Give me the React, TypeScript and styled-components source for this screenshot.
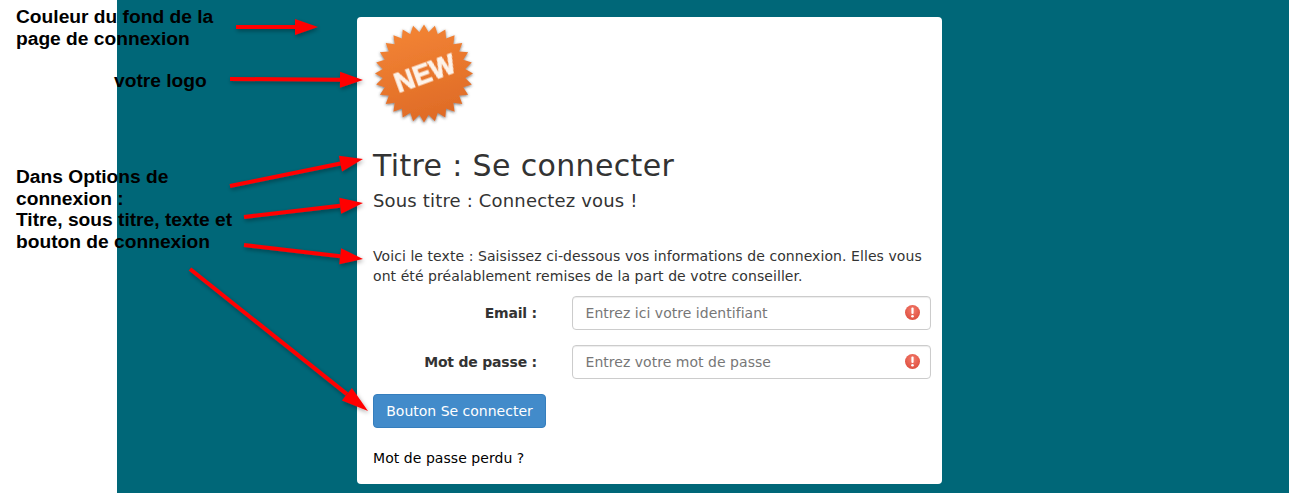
import styled, { createGlobalStyle } from "styled-components";

const GlobalStyle = createGlobalStyle`
  html, body {
    margin: 0;
    padding: 0;
    background: #fff;
  }
`;

const Page = styled.div`
  position: relative;
  display: flex;
  width: 1289px;
  height: 493px;
  overflow: hidden;
  font-family: "DejaVu Sans", Verdana, sans-serif;
  color: #333;
`;

const Margin = styled.div`
  flex: 0 0 117px;
  background: #fff;
`;

const Backdrop = styled.main`
  flex: 1;
  background: #006778;
  padding: 17px 0 0 240px;
`;

const Card = styled.section`
  box-sizing: border-box;
  width: 585px;
  height: 467px;
  background: #fff;
  border-radius: 4px;
  padding: 0 11px 0 16px;
`;

const LogoBox = styled.div`
  height: 118px;
`;

const Title = styled.h1`
  margin: 14px 0 0;
  font-size: 30px;
  font-weight: 400;
  line-height: 33px;
  letter-spacing: 0.35px;
`;

const Subtitle = styled.h2`
  margin: 9px 0 0;
  font-size: 18px;
  font-weight: 400;
  line-height: 19px;
  letter-spacing: 0.17px;
`;

const Intro = styled.p`
  margin: 36px 0 0;
  font-size: 14px;
  line-height: 20px;
  letter-spacing: 0.07px;
`;

const FormGrid = styled.form`
  display: grid;
  grid-template-columns: 164px 359px;
  column-gap: 35px;
  row-gap: 15px;
  margin-top: 10px;
`;

const Label = styled.label`
  font-size: 14px;
  font-weight: 700;
  line-height: 20px;
  letter-spacing: -0.2px;
  padding-top: 7px;
  text-align: right;
  height: 27px;
`;

const InputWrap = styled.div`
  position: relative;
  height: 34px;
`;

const Input = styled.input`
  box-sizing: border-box;
  width: 100%;
  height: 34px;
  padding: 6px 12px 6px 12.5px;
  border: 1px solid #ccc;
  border-radius: 4px;
  background: #fff;
  box-shadow: inset 0 1px 1px rgba(0, 0, 0, 0.075);
  font-family: inherit;
  font-size: 14px;
  letter-spacing: 0.03px;
  color: #555;

  &::placeholder {
    color: #777;
    opacity: 1;
  }
`;

const AlertMark = styled.svg`
  position: absolute;
  top: 8px;
  right: 10px;
  width: 17px;
  height: 17px;
`;

const SubmitButton = styled.button`
  display: block;
  box-sizing: border-box;
  width: 173px;
  height: 34px;
  margin-top: 15px;
  padding: 0;
  border: 1px solid #357ebd;
  border-radius: 4px;
  background: #428bca;
  color: #fff;
  font-family: inherit;
  font-size: 14px;
`;

const LostLink = styled.a`
  display: block;
  margin-top: 20px;
  font-size: 14px;
  line-height: 20px;
  letter-spacing: 0.05px;
  color: #000;
  text-decoration: none;
`;

const Note = styled.div<{ $left: number; $top: number }>`
  position: absolute;
  left: ${({ $left }) => $left}px;
  top: ${({ $top }) => $top}px;
  font-family: "Liberation Sans", Arial, sans-serif;
  font-size: 19.2px;
  font-weight: 700;
  line-height: 21.5px;
  color: #000;
`;

const ArrowLayer = styled.svg`
  position: absolute;
  inset: 0;
  width: 1289px;
  height: 493px;
  pointer-events: none;
`;

const arrows = [
  { x1: 236, y1: 27, x2: 318, y2: 27, head: 23 },
  { x1: 230, y1: 79, x2: 363, y2: 80, head: 23 },
  { x1: 230, y1: 186, x2: 363, y2: 159, head: 23 },
  { x1: 244, y1: 217, x2: 363, y2: 203, head: 23 },
  { x1: 244, y1: 245, x2: 363, y2: 259, head: 23 },
  { x1: 190, y1: 269, x2: 368, y2: 411, head: 27 }
];

const Arrow = ({ x1, y1, x2, y2, head }: (typeof arrows)[number]) => {
  const len = Math.hypot(x2 - x1, y2 - y1);
  const ux = (x2 - x1) / len;
  const uy = (y2 - y1) / len;
  const bx = x2 - ux * head;
  const by = y2 - uy * head;
  const half = 8;
  const pts = [
    `${x2},${y2}`,
    `${bx - uy * half},${by + ux * half}`,
    `${bx + uy * half},${by - ux * half}`
  ].join(" ");
  return (
    <g>
      <line x1={x1} y1={y1} x2={bx} y2={by} stroke="#f00" strokeWidth={4} />
      <polygon points={pts} fill="#f00" />
    </g>
  );
};

// seal outline, points alternate between the tips and the notches
const sealPoints = (cx: number, cy: number, outer: number, inner: number, teeth: number) => {
  const pts: string[] = [];
  for (let i = 0; i < teeth * 2; i++) {
    const r = i % 2 === 0 ? outer : inner;
    const a = (Math.PI * i) / teeth - Math.PI / 2;
    pts.push(`${(cx + r * Math.cos(a)).toFixed(1)},${(cy + r * Math.sin(a)).toFixed(1)}`);
  }
  return pts.join(" ");
};

const Seal = () => (
  <svg width="118" height="118" viewBox="0 0 118 118" style={{ display: "block" }}>
    <defs>
      <linearGradient id="sealFill" x1="0.35" y1="0" x2="0.65" y2="1">
        <stop offset="0" stopColor="#f38434" />
        <stop offset="1" stopColor="#de6a26" />
      </linearGradient>
      <filter id="sealShadow" x="-20%" y="-20%" width="140%" height="140%">
        <feDropShadow dx="0" dy="1" stdDeviation="1.6" floodColor="#333" floodOpacity="0.7" />
      </filter>
      <filter id="sealSoft">
        <feGaussianBlur stdDeviation="0.7" />
      </filter>
    </defs>
    <polygon
      points={sealPoints(51, 56.5, 49, 41.5, 28)}
      fill="url(#sealFill)"
      filter="url(#sealShadow)"
    />
    <text
      x="52.5"
      y="65.5"
      textAnchor="middle"
      transform="rotate(-20 51 58)"
      fontFamily="Liberation Sans, Arial, sans-serif"
      fontWeight="700"
      fontSize="27"
      fill="#fdf3ea"
      stroke="#fdf3ea"
      strokeWidth="0.8"
      filter="url(#sealSoft)"
    >
      NEW
    </text>
  </svg>
);

const Alert = () => (
  <AlertMark viewBox="0 0 17 17">
    <defs>
      <radialGradient id="alertFill" cx="0.5" cy="0.35" r="0.7">
        <stop offset="0" stopColor="#f47c6c" />
        <stop offset="1" stopColor="#dc4b3c" />
      </radialGradient>
    </defs>
    <circle cx="8.5" cy="8.5" r="7.5" fill="url(#alertFill)" />
    <rect x="7.4" y="3.6" width="2.2" height="6.4" rx="1" fill="#fff" />
    <circle cx="8.5" cy="12.2" r="1.3" fill="#fff" />
  </AlertMark>
);

export default function App() {
  return (
    <>
      <GlobalStyle />
      <Page>
        <Margin />
        <Backdrop>
          <Card>
            <LogoBox>
              <Seal />
            </LogoBox>
            <Title>Titre : Se connecter</Title>
            <Subtitle>Sous titre : Connectez vous !</Subtitle>
            <Intro>
              Voici le texte : Saisissez ci-dessous vos informations de connexion. Elles vous
              ont été préalablement remises de la part de votre conseiller.
            </Intro>
            <FormGrid>
              <Label>Email :</Label>
              <InputWrap>
                <Input placeholder="Entrez ici votre identifiant" />
                <Alert />
              </InputWrap>
              <Label>Mot de passe :</Label>
              <InputWrap>
                <Input placeholder="Entrez votre mot de passe" />
                <Alert />
              </InputWrap>
            </FormGrid>
            <SubmitButton type="button">Bouton Se connecter</SubmitButton>
            <LostLink href="#">Mot de passe perdu ?</LostLink>
          </Card>
        </Backdrop>
        <Note $left={16} $top={6}>
          Couleur du fond de la
          <br />
          page de connexion
        </Note>
        <Note $left={114} $top={70}>
          votre logo
        </Note>
        <Note $left={16} $top={166}>
          Dans Options de
          <br />
          connexion :
          <br />
          Titre, sous titre, texte et
          <br />
          bouton de connexion
        </Note>
        <ArrowLayer viewBox="0 0 1289 493">
          <defs>
            <filter id="arrowShadow" x="-20%" y="-20%" width="140%" height="140%">
              <feDropShadow dx="1" dy="2" stdDeviation="2" floodColor="#000" floodOpacity="0.35" />
            </filter>
          </defs>
          <g filter="url(#arrowShadow)">
            {arrows.map((a) => (
              <Arrow key={`${a.x1}-${a.y1}`} {...a} />
            ))}
          </g>
        </ArrowLayer>
      </Page>
    </>
  );
}
